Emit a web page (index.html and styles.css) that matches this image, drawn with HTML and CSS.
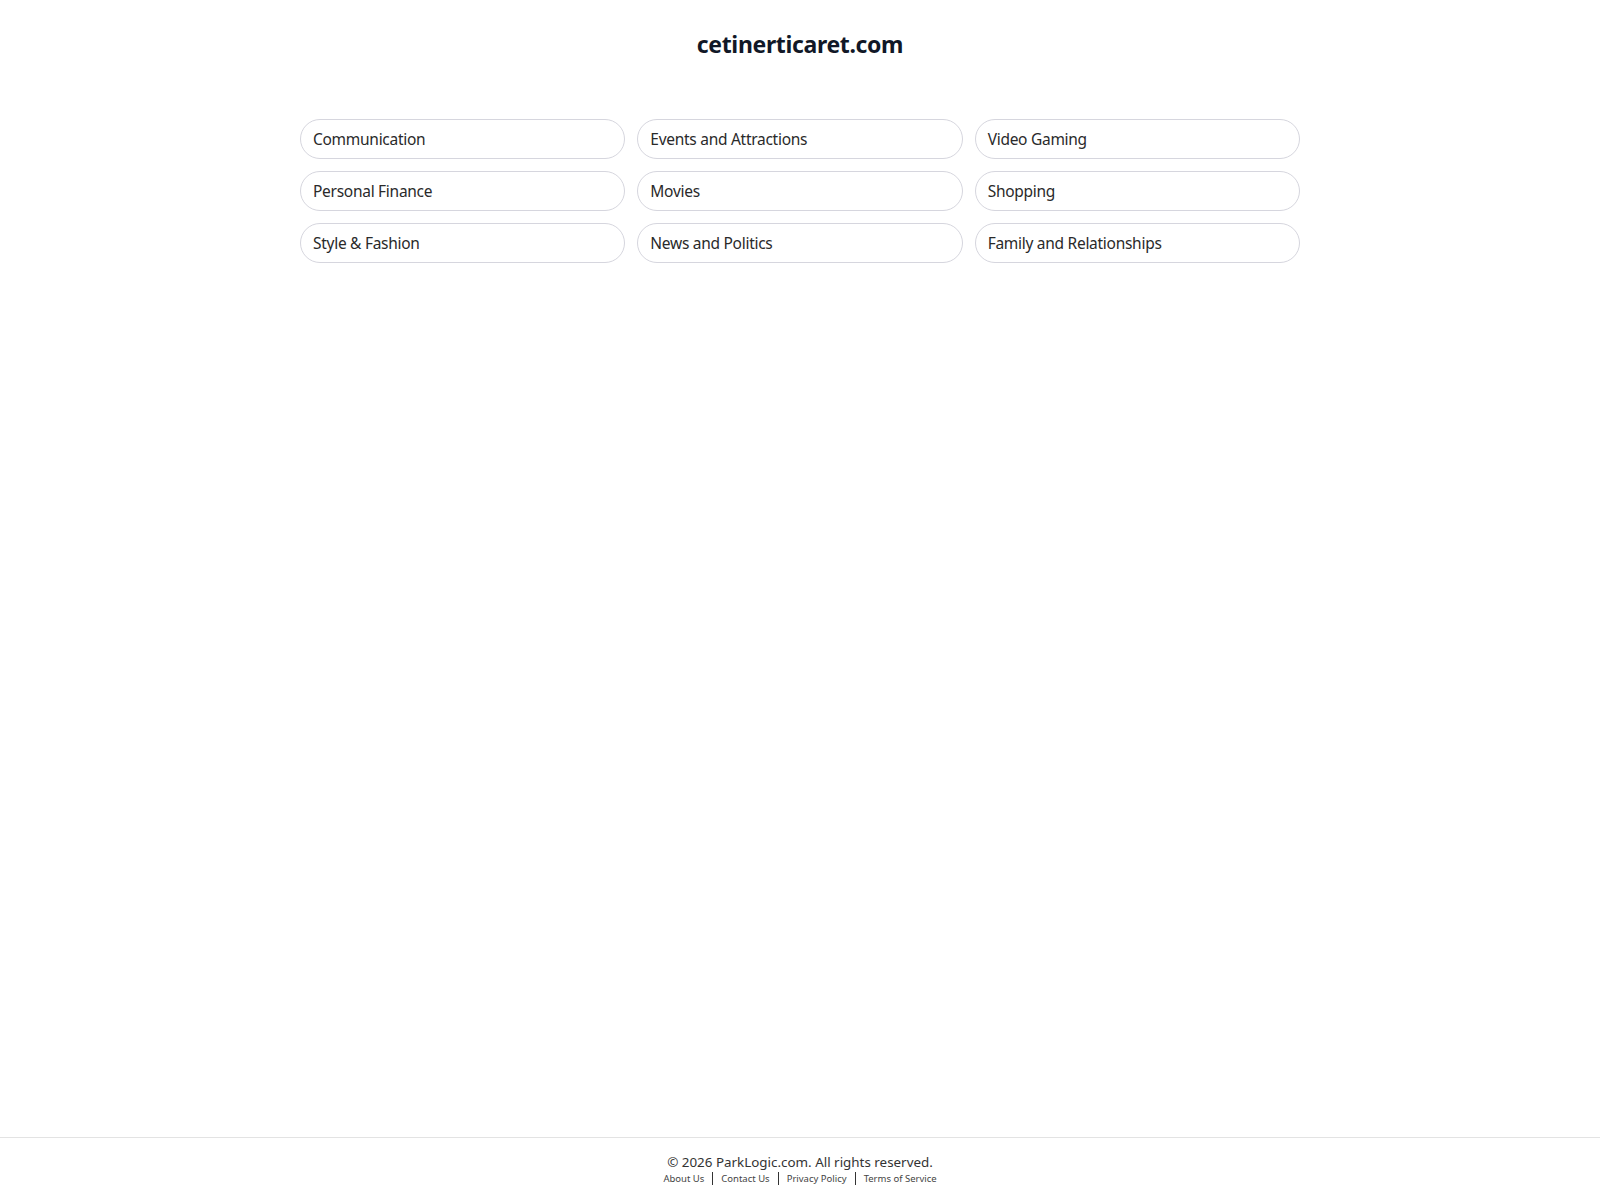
FILE: index.html
```html
<!DOCTYPE html>
<html lang="en">
<head>
<meta charset="utf-8">
<title>cetinerticaret.com</title>
<link rel="stylesheet" href="styles.css">
</head>
<body>
<div class="page">
  <header class="header">
    <h1 class="title">cetinerticaret.com</h1>
  </header>
  <main class="main">
    <div class="grid">
      <a class="pill" href="#">Communication</a>
      <a class="pill" href="#">Events and Attractions</a>
      <a class="pill" href="#">Video Gaming</a>
      <a class="pill" href="#">Personal Finance</a>
      <a class="pill" href="#">Movies</a>
      <a class="pill" href="#">Shopping</a>
      <a class="pill" href="#">Style &amp; Fashion</a>
      <a class="pill" href="#">News and Politics</a>
      <a class="pill" href="#">Family and Relationships</a>
    </div>
  </main>
  <footer class="footer">
    <div class="copy">© 2026 ParkLogic.com. All rights reserved.</div>
    <nav class="links">
      <a href="#">About Us</a>
      <span class="sep"></span>
      <a href="#">Contact Us</a>
      <span class="sep"></span>
      <a href="#">Privacy Policy</a>
      <span class="sep"></span>
      <a href="#">Terms of Service</a>
    </nav>
  </footer>
</div>
</body>
</html>
```
FILE: styles.css
```css
* { box-sizing: border-box; }
html, body { margin: 0; padding: 0; background: #fff; }
body {
  font-family: "Noto Sans", "DejaVu Sans", sans-serif;
  color: #222;
}
.page {
  min-height: 100vh;
  display: flex;
  flex-direction: column;
}
.header {
  padding-top: 30px;
  text-align: center;
}
.title {
  margin: 0;
  font-size: 23px;
  line-height: 28px;
  font-weight: 700;
  letter-spacing: -0.35px;
  color: #111827;
}
.main {
  flex: 1;
  padding-top: 61px;
}
.grid {
  width: 1000px;
  margin: 0 auto;
  display: grid;
  grid-template-columns: repeat(3, 1fr);
  gap: 12px;
}
.pill {
  display: block;
  height: 40px;
  line-height: 38px;
  padding: 0 12px;
  border: 1px solid #d6d6de;
  border-radius: 20px;
  font-size: 15.5px;
  letter-spacing: -0.28px;
  color: #2a2a2a;
  text-decoration: none;
  white-space: nowrap;
}
.footer {
  border-top: 1px solid #e3e3e3;
  padding: 15px 0 15px;
  text-align: center;
}
.copy {
  font-size: 13.4px;
  line-height: 18px;
  color: #333;
}
.links {
  display: flex;
  justify-content: center;
  align-items: center;
  height: 14px;
  font-size: 9.5px;
}
.links a {
  color: #444;
  text-decoration: none;
}
.sep {
  display: block;
  width: 0;
  height: 13px;
  border-left: 1px solid #333;
  margin: 0 8px;
}
```
